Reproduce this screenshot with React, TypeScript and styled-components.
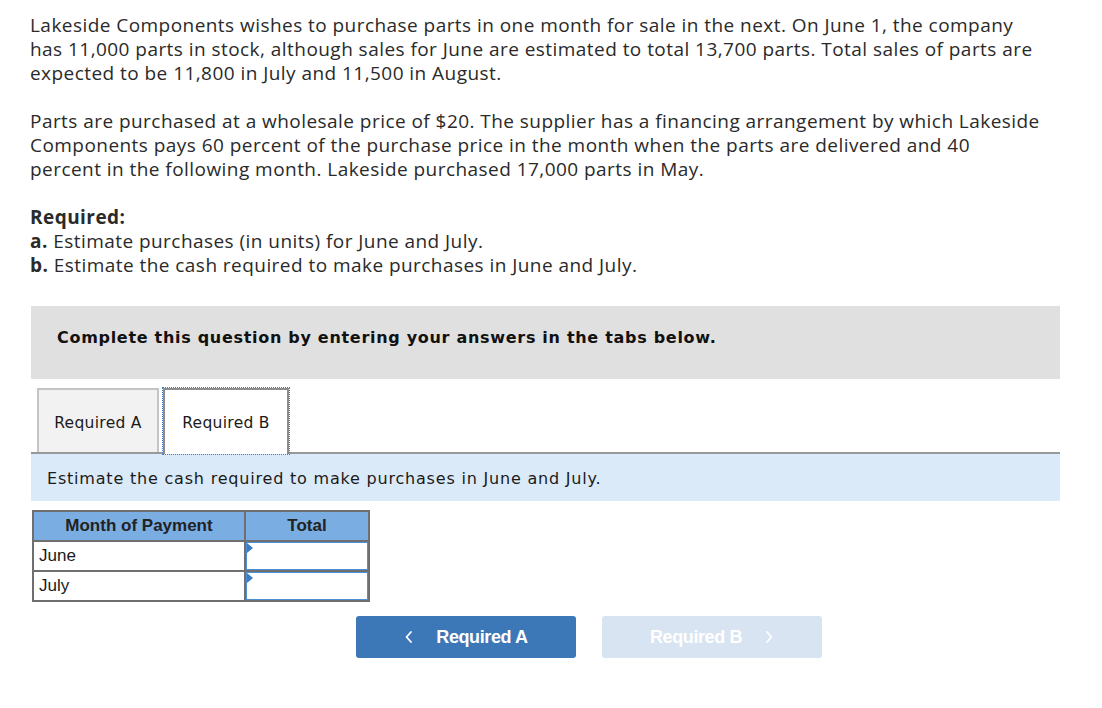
import styled, { createGlobalStyle } from "styled-components";

const GlobalStyle = createGlobalStyle`
  body {
    margin: 0;
    background: #ffffff;
    color: #222222;
  }
`;

const Page = styled.div`
  width: 1030px;
  padding: 13px 0 40px 30px;
`;

const Para = styled.p`
  margin: 0 0 24px 0;
  font-family: "Open Sans", "Liberation Sans", sans-serif;
  font-size: 19px;
  line-height: 24px;
  letter-spacing: 0.45px;
  color: #2a2a2a;
  white-space: nowrap;
  b {
    font-weight: 700;
  }
`;

const Required = styled(Para)`
  margin-bottom: 29px;
`;

const Banner = styled.div`
  margin-left: 1px;
  height: 73px;
  background: #e0e0e0;
  display: flex;
  align-items: center;
  padding: 0 0 10px 26px;
  box-sizing: border-box;
  font-family: "DejaVu Sans", Verdana, sans-serif;
  font-weight: 700;
  font-size: 16px;
  letter-spacing: 0.7px;
  color: #111111;
`;

const TabRow = styled.div`
  margin: 9px 0 0 1px;
  display: flex;
  gap: 4px;
  padding-left: 6px;
  border-bottom: 2px solid #999999;
  height: 64px;
`;

const Tab = styled.div<{ $active?: boolean }>`
  width: ${(p) => (p.$active ? 126 : 122)}px;
  height: ${(p) => (p.$active ? 66 : 64)}px;
  box-sizing: border-box;
  display: flex;
  align-items: center;
  justify-content: center;
  font-family: "DejaVu Sans", Verdana, sans-serif;
  font-size: 15.5px;
  letter-spacing: 0.3px;
  color: #1a1a1a;
  background: ${(p) => (p.$active ? "#ffffff" : "#f2f2f2")};
  border: 2px solid ${(p) => (p.$active ? "#8c8c8c" : "#c4c4c4")};
  border-bottom: none;
  outline: ${(p) => (p.$active ? "1px dotted #3f7ec4" : "none")};
  padding-top: ${(p) => (p.$active ? 2 : 3)}px;
  position: relative;
  z-index: 1;
`;

const Instruction = styled.div`
  margin-left: 1px;
  height: 47px;
  background: #dbeaf8;
  display: flex;
  align-items: center;
  padding: 2px 0 0 16px;
  box-sizing: border-box;
  font-family: "DejaVu Sans", Verdana, sans-serif;
  font-size: 16px;
  letter-spacing: 0.8px;
  color: #1a1a1a;
`;

const Table = styled.table`
  margin: 9px 0 0 2px;
  border-collapse: collapse;
  font-family: "Liberation Sans", Arial, sans-serif;
  font-size: 17px;
  color: #1a1a1a;
`;

const Th = styled.th<{ $w: number }>`
  width: ${(p) => p.$w}px;
  height: 28px;
  padding: 0;
  background: #7aade1;
  border: 2px solid #6f6f6f;
  font-weight: 700;
  color: #222;
  text-align: center;
`;

const Td = styled.td`
  height: 28px;
  padding: 0 0 0 5px;
  border: 2px solid #6f6f6f;
  text-align: left;
`;

const InputCell = styled.td`
  padding: 0;
  border: 2px solid #6f6f6f;
  height: 28px;
`;

const AnswerBox = styled.div`
  position: relative;
  height: 28px;
  box-sizing: border-box;
  border: 1px solid #4a90d9;
  background: #ffffff;
  &::before {
    content: "";
    position: absolute;
    left: 0;
    top: 0;
    border-top: 5px solid transparent;
    border-bottom: 5px solid transparent;
    border-left: 6px solid #3d7cc4;
  }
`;

const NavRow = styled.div`
  display: flex;
  gap: 26px;
  margin-top: 14px;
  padding-left: 326px;
`;

const NavButton = styled.div<{ $disabled?: boolean }>`
  width: 220px;
  height: 42px;
  border-radius: 3px;
  background: ${(p) => (p.$disabled ? "#d8e4f1" : "#3c78b8")};
  color: #ffffff;
  display: flex;
  align-items: center;
  justify-content: center;
  gap: 22px;
  font-family: "Liberation Sans", Arial, sans-serif;
  font-weight: 700;
  font-size: 18px;
  letter-spacing: -0.4px;
`;

const Chevron = ({ dir }: { dir: "left" | "right" }) => (
  <svg width="10" height="14" viewBox="0 0 10 14">
    <path
      d={dir === "left" ? "M7 2 L2.5 7 L7 12" : "M3 2 L7.5 7 L3 12"}
      fill="none"
      stroke="#ffffff"
      strokeWidth="1.8"
      strokeLinecap="round"
      strokeLinejoin="round"
    />
  </svg>
);

const rows = ["June", "July"];

export default function App() {
  return (
    <Page>
      <GlobalStyle />
      <Para>
        Lakeside Components wishes to purchase parts in one month for sale in
        the next. On June 1, the company
        <br />
        has 11,000 parts in stock, although sales for June are estimated to
        total 13,700 parts. Total sales of parts are
        <br />
        expected to be 11,800 in July and 11,500 in August.
      </Para>
      <Para>
        Parts are purchased at a wholesale price of $20. The supplier has a
        financing arrangement by which Lakeside
        <br />
        Components pays 60 percent of the purchase price in the month when the
        parts are delivered and 40
        <br />
        percent in the following month. Lakeside purchased 17,000 parts in May.
      </Para>
      <Required>
        <b>Required:</b>
        <br />
        <b>a.</b> Estimate purchases (in units) for June and July.
        <br />
        <b>b.</b> Estimate the cash required to make purchases in June and
        July.
      </Required>
      <Banner>
        Complete this question by entering your answers in the tabs below.
      </Banner>
      <TabRow>
        <Tab>Required A</Tab>
        <Tab $active>Required B</Tab>
      </TabRow>
      <Instruction>
        Estimate the cash required to make purchases in June and July.
      </Instruction>
      <Table>
        <thead>
          <tr>
            <Th $w={210}>Month of Payment</Th>
            <Th $w={122}>Total</Th>
          </tr>
        </thead>
        <tbody>
          {rows.map((r) => (
            <tr key={r}>
              <Td>{r}</Td>
              <InputCell>
                <AnswerBox />
              </InputCell>
            </tr>
          ))}
        </tbody>
      </Table>
      <NavRow>
        <NavButton>
          <Chevron dir="left" />
          Required A
        </NavButton>
        <NavButton $disabled>
          Required B
          <Chevron dir="right" />
        </NavButton>
      </NavRow>
    </Page>
  );
}
